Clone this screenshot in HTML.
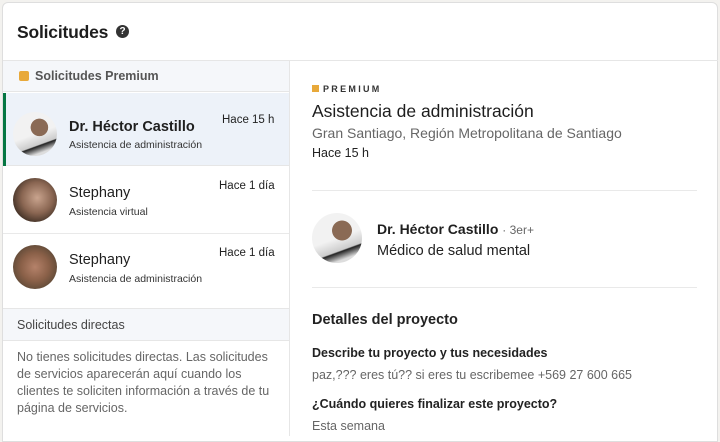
<!DOCTYPE html>
<html><head><meta charset="utf-8"><style>
*{margin:0;padding:0;box-sizing:border-box}
body{width:720px;height:436px;background:#f3f2ef;font-family:"Liberation Sans",sans-serif;position:relative;overflow:hidden;color:#1f1f1f}
.a{position:absolute;white-space:nowrap}
.card{position:absolute;left:2px;top:2px;width:716px;height:440px;background:#fff;border:1px solid #dedede;border-radius:6px 6px 0 0}
.av{position:absolute;border-radius:50%;overflow:hidden}
</style></head><body>
<div class="card"></div>
<div class="a" style="left:17px;top:22px;font-size:17.5px;font-weight:bold;color:#1d1d1d;letter-spacing:-0.2px">Solicitudes</div>
<div class="a" style="left:116px;top:25px;width:13px;height:13px;border-radius:50%;background:#333;color:#fff;font-size:10px;font-weight:bold;text-align:center;line-height:13px">?</div>
<div class="a" style="left:3px;top:60px;width:715px;height:1px;background:#e6e6e6"></div>
<div class="a" style="left:289px;top:61px;width:1px;height:375px;background:#e6e6e6"></div>
<!-- left -->
<div class="a" style="left:3px;top:61px;width:286px;height:31px;background:#f5f7fa;border-bottom:1px solid #e6e6e6"></div>
<div class="a" style="left:19px;top:71px;width:10px;height:10px;background:#e8a93a;border-radius:2px"></div>
<div class="a" style="left:35px;top:69px;font-size:12.5px;font-weight:bold;color:#555">Solicitudes Premium</div>
<div class="a" style="left:3px;top:93px;width:286px;height:73px;background:#edf2f9;border-bottom:1px solid #e6e6e6"></div>
<div class="a" style="left:3px;top:93px;width:3px;height:73px;background:#057642"></div>
<div class="av" style="left:13px;top:112px;width:44px;height:44px;background:radial-gradient(circle at 60% 35%,#8a6a55 0 22%,transparent 23%),linear-gradient(160deg,#f2f2f2 0 50%,#ccc 70%,#222 72%,#ddd 85%)"></div>
<div class="a" style="left:69px;top:119px;font-size:14.5px;font-weight:bold">Dr. Héctor Castillo</div>
<div class="a" style="left:69px;top:139px;font-size:10.5px;color:#333">Asistencia de administración</div>
<div class="a" style="left:222px;top:114px;font-size:11.5px;color:#222">Hace 15 h</div>
<div class="a" style="left:3px;top:233px;width:286px;height:1px;background:#e9e9e9"></div>
<div class="av" style="left:13px;top:178px;width:44px;height:44px;background:radial-gradient(circle at 55% 45%,#c9a48e 0,#8a6652 45%,#2a2018 85%)"></div>
<div class="a" style="left:69px;top:185px;font-size:14.5px">Stephany</div>
<div class="a" style="left:69px;top:206px;font-size:10.5px;color:#333">Asistencia virtual</div>
<div class="a" style="left:219px;top:180px;font-size:11.5px;color:#222">Hace 1 día</div>
<div class="av" style="left:13px;top:245px;width:44px;height:44px;background:radial-gradient(circle at 50% 50%,#b5826a 0,#8a6048 45%,#4c4030 90%)"></div>
<div class="a" style="left:69px;top:252px;font-size:14.5px">Stephany</div>
<div class="a" style="left:69px;top:273px;font-size:10.5px;color:#333">Asistencia de administración</div>
<div class="a" style="left:219px;top:247px;font-size:11.5px;color:#222">Hace 1 día</div>
<div class="a" style="left:3px;top:308px;width:286px;height:33px;background:#f5f7fa;border-top:1px solid #e6e6e6;border-bottom:1px solid #e6e6e6"></div>
<div class="a" style="left:17px;top:318px;font-size:12.5px;color:#444">Solicitudes directas</div>
<div class="a" style="left:17px;top:349px;font-size:12.5px;line-height:17px;color:#666;white-space:normal;width:268px">No tienes solicitudes directas. Las solicitudes de servicios aparecerán aquí cuando los clientes te soliciten información a través de tu página de servicios.</div>
<!-- right -->
<div class="a" style="left:312px;top:85px;width:7px;height:7px;background:#e8a93a"></div>
<div class="a" style="left:323px;top:84px;font-size:9px;font-weight:bold;letter-spacing:2.3px;color:#333">PREMIUM</div>
<div class="a" style="left:312px;top:101px;font-size:17.5px;color:#1d1d1d">Asistencia de administración</div>
<div class="a" style="left:312px;top:125px;font-size:14px;color:#666">Gran Santiago, Región Metropolitana de Santiago</div>
<div class="a" style="left:312px;top:146px;font-size:12.5px;color:#222">Hace 15 h</div>
<div class="a" style="left:312px;top:190px;width:385px;height:1px;background:#e9e9e9"></div>
<div class="av" style="left:312px;top:213px;width:50px;height:50px;background:radial-gradient(circle at 60% 35%,#8a6a55 0 22%,transparent 23%),linear-gradient(160deg,#f2f2f2 0 50%,#ccc 70%,#222 72%,#ddd 85%)"></div>
<div class="a" style="left:377px;top:221px;font-size:14px;font-weight:bold">Dr. Héctor Castillo <span style="font-weight:normal;font-size:12px;color:#666">· 3er+</span></div>
<div class="a" style="left:377px;top:243px;font-size:14.5px;color:#222">Médico de salud mental</div>
<div class="a" style="left:312px;top:287px;width:385px;height:1px;background:#e9e9e9"></div>
<div class="a" style="left:312px;top:312px;font-size:14.5px;font-weight:bold;color:#222">Detalles del proyecto</div>
<div class="a" style="left:312px;top:346px;font-size:12.5px;font-weight:bold;color:#222">Describe tu proyecto y tus necesidades</div>
<div class="a" style="left:312px;top:368px;font-size:12.5px;color:#666">paz,??? eres tú?? si eres tu escribemee +569 27 600 665</div>
<div class="a" style="left:312px;top:397px;font-size:12.5px;font-weight:bold;color:#222">¿Cuándo quieres finalizar este proyecto?</div>
<div class="a" style="left:312px;top:419px;font-size:12.5px;color:#666">Esta semana</div>
</body></html>
